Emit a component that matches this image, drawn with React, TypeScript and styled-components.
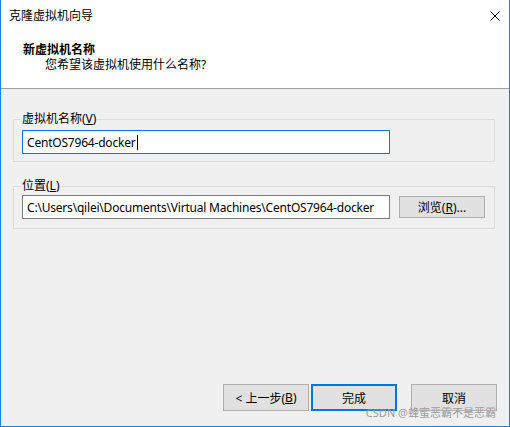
import React from 'react';
import styled, { createGlobalStyle } from 'styled-components';

const GlobalStyle = createGlobalStyle`
    html, body {
        margin: 0;
        padding: 0;
        background: #ffffff;
    }
    * {
        box-sizing: border-box;
    }
`;

const FONT = `"Noto Sans", "Noto Sans CJK SC", sans-serif`;

const Window = styled.div`
    position: relative;
    width: 510px;
    height: 427px;
    display: flex;
    flex-direction: column;
    border: 1px solid #1883d7;
    border-top: none;
    background: #f0f0f0;
    font-family: ${FONT};
    font-size: 12px;
    color: #000;
`;

const TitleBar = styled.div`
    height: 31px;
    display: flex;
    align-items: center;
    justify-content: space-between;
    padding: 0 9px 0 8px;
    background: #fff;
    line-height: 16px;
`;

const Header = styled.div`
    height: 58px;
    padding: 11px 0 0 22px;
    background: #fff;
    border-bottom: 1px solid #a0a0a0;
`;

const HeaderTitle = styled.div`
    font-weight: bold;
    line-height: 16px;
`;

const HeaderSub = styled.div`
    line-height: 16px;
    margin-top: -1px;
    padding-left: 22px;
`;

const Body = styled.div`
    flex: 1;
    display: flex;
    flex-direction: column;
    padding: 0 12px 15px 12px;
`;

const Group = styled.fieldset<{ $top: number; $pt: number; $pb: number }>`
    margin: ${p => p.$top}px 2px 0 0;
    padding: ${p => p.$pt}px 8px ${p => p.$pb}px 8px;
    border: 1px solid #dcdcdc;
    min-width: 0;
`;

const Legend = styled.legend`
    padding: 0 1px;
    margin-left: -1px;
    line-height: 16px;
    font-size: 12px;
`;

const Row = styled.div`
    display: flex;
    align-items: center;
    gap: 9px;
`;

const TextBox = styled.div<{ $focused?: boolean }>`
    width: 368px;
    height: 24px;
    display: flex;
    align-items: center;
    padding-left: 4px;
    background: #fff;
    border: 1px solid ${p => (p.$focused ? '#0078d7' : '#7a7a7a')};
    white-space: nowrap;
    overflow: hidden;
    letter-spacing: -0.2px;
`;

const Caret = styled.span`
    display: inline-block;
    width: 1px;
    height: 15px;
    background: #000;
    margin-left: 1px;
`;

const Button = styled.div<{ $default?: boolean; $h?: number }>`
    width: 86px;
    height: ${p => p.$h ?? 27}px;
    display: flex;
    align-items: center;
    justify-content: center;
    background: #e1e1e1;
    border: ${p => (p.$default ? '2px solid #0078d7' : '1px solid #adadad')};
`;

const Footer = styled.div`
    margin-top: auto;
    display: flex;
    justify-content: flex-end;
    align-items: center;
`;

const Spacer = styled.div<{ $w: number }>`
    width: ${p => p.$w}px;
`;

const Watermark = styled.div`
    position: absolute;
    right: 13px;
    bottom: 6px;
    font-size: 11px;
    line-height: 14px;
    color: rgba(120, 120, 120, 0.75);
    text-shadow: 0 0 1px rgba(255, 255, 255, 0.6);
    pointer-events: none;
`;

const CloseIcon = () => (
    <svg width="10" height="10" viewBox="0 0 10 10">
        <path d="M0.5 0.5 L9.5 9.5 M9.5 0.5 L0.5 9.5" stroke="#000" strokeWidth="1" />
    </svg>
);

export default function App() {
    return (
        <>
            <GlobalStyle />
            <Window>
                <TitleBar>
                    <span>克隆虚拟机向导</span>
                    <CloseIcon />
                </TitleBar>
                <Header>
                    <HeaderTitle>新虚拟机名称</HeaderTitle>
                    <HeaderSub>您希望该虚拟机使用什么名称?</HeaderSub>
                </Header>
                <Body>
                    <Group $top={22} $pt={3} $pb={7}>
                        <Legend>
                            虚拟机名称(<u>V</u>)
                        </Legend>
                        <TextBox $focused>
                            CentOS7964-docker
                            <Caret />
                        </TextBox>
                    </Group>
                    <Group $top={16} $pt={1} $pb={9}>
                        <Legend>
                            位置(<u>L</u>)
                        </Legend>
                        <Row>
                            <TextBox>C:\Users\qilei\Documents\Virtual Machines\CentOS7964-docker</TextBox>
                            <Button $h={22}>
                                浏览(<u>R</u>)...
                            </Button>
                        </Row>
                    </Group>
                    <Footer>
                        <Button>
                            &lt; 上一步(<u>B</u>)
                        </Button>
                        <Spacer $w={2} />
                        <Button $default>完成</Button>
                        <Spacer $w={14} />
                        <Button>取消</Button>
                    </Footer>
                </Body>
                <Watermark>CSDN @蜂蜜恶霸不是恶霸</Watermark>
            </Window>
        </>
    );
}
